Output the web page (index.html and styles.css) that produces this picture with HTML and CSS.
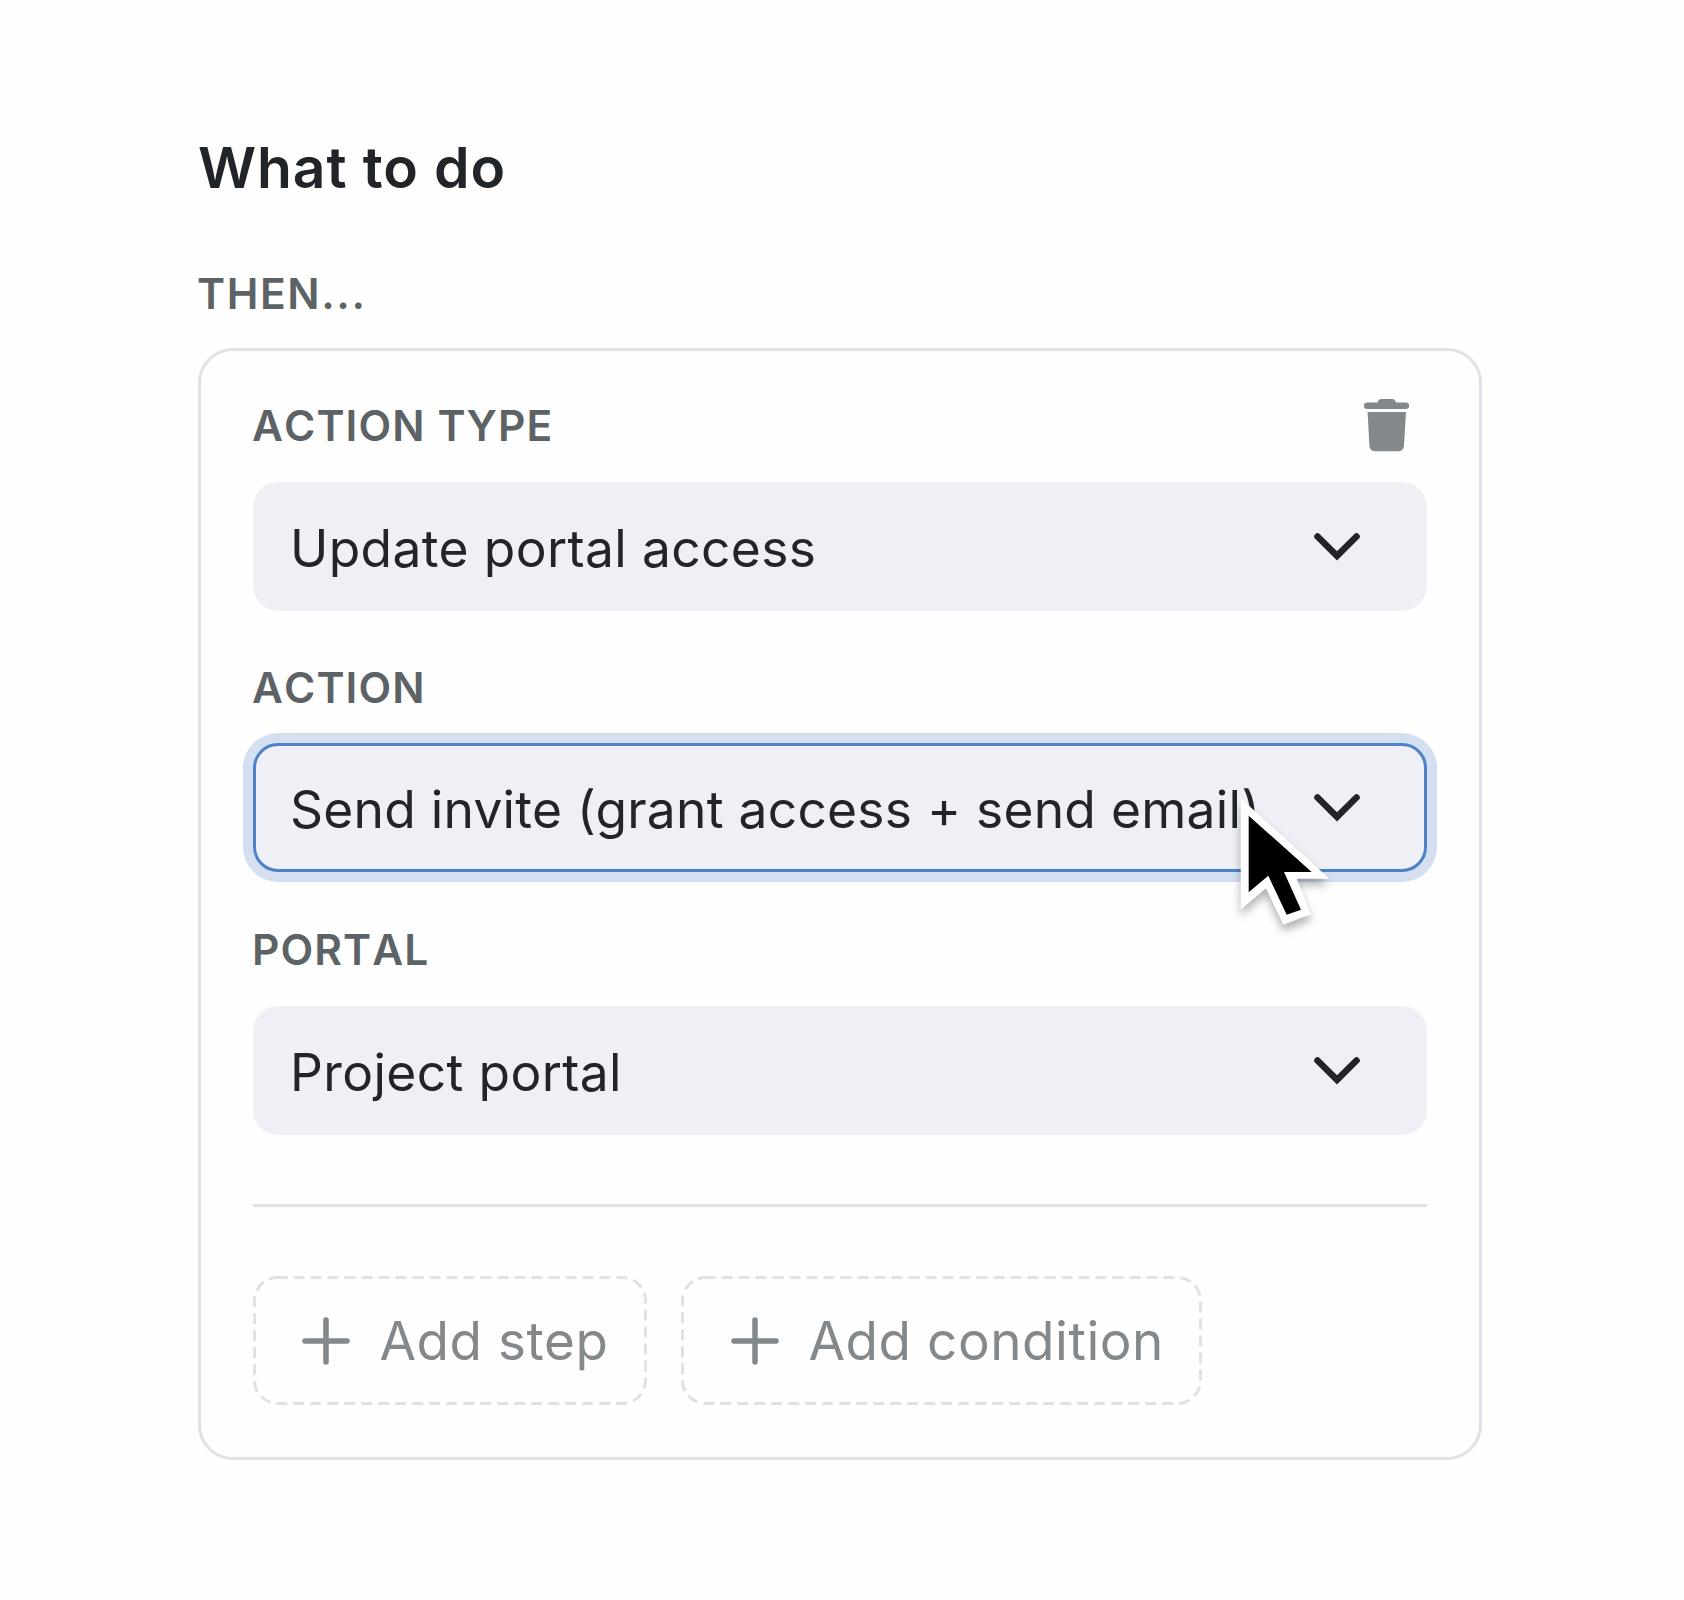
FILE: index.html
```
<!DOCTYPE html>
<html lang="en">
<head>
    <meta charset="UTF-8">
    <title>What to do</title>
    <link rel="stylesheet" href="styles.css">
</head>
<body>

    <div id="main-container">
        <h2 class="title">What to do</h2>
        <div class="label then-label">THEN...</div>

        <div class="card">
            <div class="label-row">
                <div class="label">ACTION TYPE</div>
                <svg class="trash" viewBox="0 0 45 53">
                    <path d="M13.5 3.5C14 1 15.5 0 17.5 0H28C30 0 31.5 1 32 3.5H42A3.2 3.2 0 0 1 42 10H3A3.2 3.2 0 0 1 3 3.5Z"/>
                    <path d="M3.6 13H42L40 46.5Q39.6 52.3 34 52.3H11.5Q5.8 52.3 5.4 46.5Z"/>
                </svg>
            </div>
            <div class="select">
                <span>Update portal access</span>
                <svg class="chevron" viewBox="0 0 46 28"><path d="M3.5 3.5L23 22.8L42.5 3.5"/></svg>
            </div>

            <div class="label-row">
                <div class="label">ACTION</div>
            </div>
            <div class="select focused">
                <span>Send invite (grant access + send email)</span>
                <svg class="chevron" viewBox="0 0 46 28"><path d="M3.5 3.5L23 22.8L42.5 3.5"/></svg>
                <svg class="cursor" viewBox="0 0 110 150">
                    <polygon fill="#fff" points="10.7,8.3 99.5,88.7 66.7,88.7 81,124.3 53.3,134.7 36,98.3 10.7,119.7"/>
                    <polygon points="18.7,25.7 81.7,82 54,82 71,119.7 56.7,124.7 38.3,85.7 18.7,102.3"/>
                </svg>
            </div>

            <div class="label-row">
                <div class="label">PORTAL</div>
            </div>
            <div class="select">
                <span>Project portal</span>
                <svg class="chevron" viewBox="0 0 46 28"><path d="M3.5 3.5L23 22.8L42.5 3.5"/></svg>
            </div>

            <div class="divider"></div>

            <div class="buttons">
                <div class="add-button add-step">
                    <svg class="dashes" viewBox="0 0 394 129"><rect x="1.5" y="1.5" width="391" height="126" rx="23"/></svg>
                    <svg class="plus" viewBox="0 0 48 48"><path d="M24 3V45M3 24H45"/></svg>
                    <span>Add step</span>
                </div>
                <div class="add-button add-condition">
                    <svg class="dashes" viewBox="0 0 521 129"><rect x="1.5" y="1.5" width="518" height="126" rx="23"/></svg>
                    <svg class="plus" viewBox="0 0 48 48"><path d="M24 3V45M3 24H45"/></svg>
                    <span>Add condition</span>
                </div>
            </div>
        </div>
    </div>

</body>
</html>
```

FILE: styles.css
```
* {
    box-sizing: border-box;
}
body {
    margin: 0;
    background-color: #fefefe;
    font-family: Inter, sans-serif;
    color: #212529;
}
#main-container {
    width: 1284px;
    margin-left: 198px;
    padding-top: 134px;
}
.title {
    margin: 0 0 66px;
    font-size: 57px;
    font-weight: 600;
    line-height: 68px;
    letter-spacing: 0.9px;
}
.label {
    margin-left: -1px;
    color: #5c6265;
    font-size: 42.5px;
    font-weight: 600;
    line-height: 52px;
    letter-spacing: 1.1px;
    font-kerning: none;
}
.then-label {
    margin-bottom: 28px;
    letter-spacing: 1.6px;
}
.card {
    border: 3px solid #dee2e6;
    border-radius: 35px;
    padding: 49px 52px 52px;
}
.label-row {
    display: flex;
    justify-content: space-between;
    align-items: center;
    height: 52px;
    margin-bottom: 30px;
}
.trash {
    width: 45px;
    height: 53px;
    margin-right: 18px;
    margin-bottom: 2px;
    fill: #82888b;
}
.select {
    display: flex;
    justify-content: space-between;
    align-items: center;
    height: 129px;
    margin-bottom: 51px;
    padding: 0 64px 0 34px;
    border: 3px solid transparent;
    border-radius: 25px;
    background-color: #eff0f5;
    font-size: 51.5px;
    letter-spacing: 0.37px;
    white-space: nowrap;
}
.select span {
    padding-top: 2px;
}
.select.focused {
    position: relative;
    margin-top: -1px;
    margin-bottom: 52px;
    border-color: #4d83c6;
    box-shadow: 0 0 0 10px #d4dff1;
    letter-spacing: 0.25px;
}
.chevron {
    width: 46px;
    height: 28px;
    fill: none;
    stroke: #212529;
    stroke-width: 6.6px;
    stroke-linecap: round;
}
.cursor {
    position: absolute;
    left: 974px;
    top: 44px;
    width: 110px;
    height: 150px;
    overflow: visible;
    filter: drop-shadow(0 6px 4px rgba(0, 0, 0, 0.3));
}
.divider {
    height: 3px;
    margin: 69px 0;
    background-color: #dee2e6;
}
.buttons {
    display: flex;
    gap: 34px;
}
.add-button {
    position: relative;
    display: flex;
    align-items: center;
    gap: 30px;
    height: 129px;
    color: #82888b;
    font-size: 53px;
    letter-spacing: 0.55px;
    white-space: nowrap;
}
.add-step {
    width: 394px;
    padding-left: 48.5px;
}
.add-condition {
    width: 521px;
    padding-left: 49.5px;
}
/* border-style: dashed makes the dashes too short */
.dashes {
    position: absolute;
    top: 0;
    left: 0;
    width: 100%;
    height: 100%;
    fill: none;
    stroke: #dee2e6;
    stroke-width: 3px;
    stroke-dasharray: 11 6;
    stroke-dashoffset: 1;
}
.plus {
    width: 48px;
    height: 48px;
    fill: none;
    stroke: #82888b;
    stroke-width: 5.5px;
    stroke-linecap: round;
}
```
